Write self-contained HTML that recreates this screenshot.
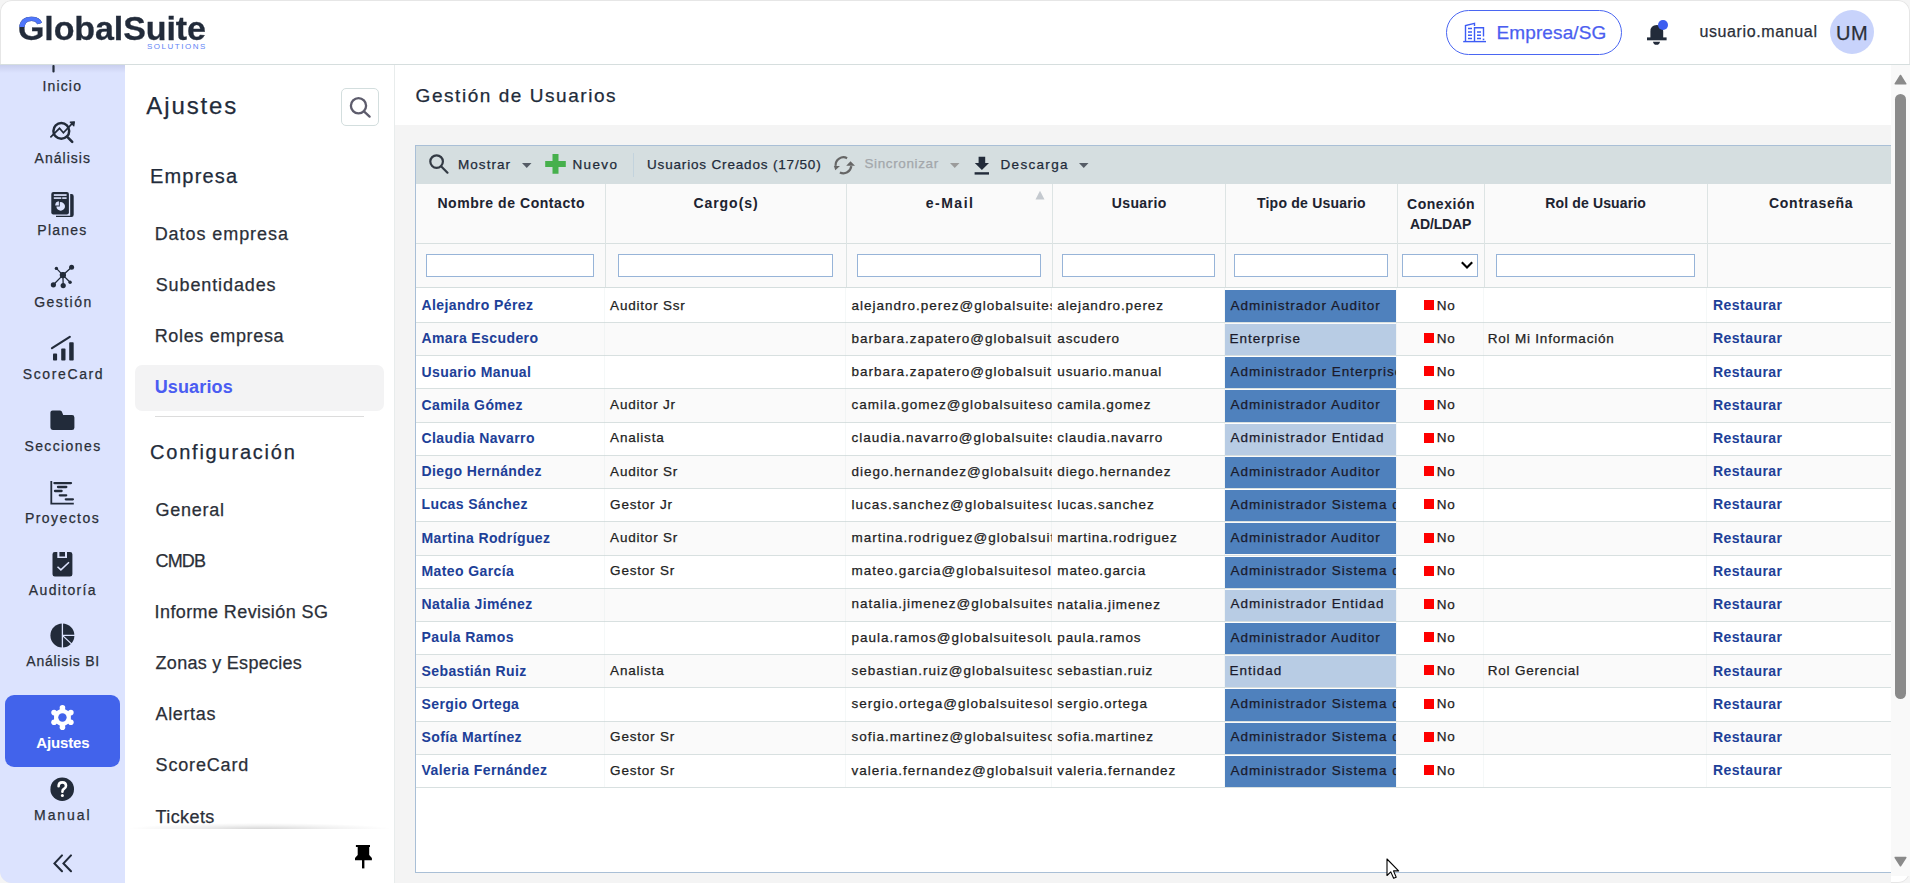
<!DOCTYPE html>
<html><head><meta charset="utf-8"><style>
html,body{margin:0;padding:0;}
body{width:1910px;height:883px;overflow:hidden;position:relative;background:#f5f5f5;font-family:"Liberation Sans", sans-serif;}
.t{position:absolute;white-space:nowrap;-webkit-text-stroke:0.25px currentColor;}
.b{-webkit-text-stroke:0.05px currentColor;}
.a{position:absolute;}
svg{position:absolute;overflow:visible;}
</style></head><body>
<div class="a" style="left:0;top:0;width:1910px;height:883px;background:#fff;border-radius:12px;box-shadow:0 0 0 1px #e6e6e6 inset;"></div>
<div class="a" style="left:0;top:64px;width:1910px;height:1px;background:#d6dede;"></div>
<div class="a" style="left:0;top:65px;width:125px;height:818px;background:#dce3fe;border-bottom-left-radius:12px;"></div>
<div class="a" style="left:0;top:65px;width:125px;height:8px;background:linear-gradient(#c9cfee,rgba(220,227,254,0));"></div>
<div class="a" style="left:394px;top:65px;width:1px;height:818px;background:#e8ecec;"></div>
<div class="a" style="left:395px;top:125px;width:1496px;height:758px;background:#f4f4f4;"></div>
<div class="t b" style="left:18.00px;top:11.22px;font-size:34px;line-height:34px;color:#222b3a;font-weight:700;letter-spacing:-0.100px;background:linear-gradient(#4f76fb,#4f76fb) 0 0/27px 16.5px no-repeat,linear-gradient(#222b3a,#222b3a);-webkit-background-clip:text;background-clip:text;color:transparent;-webkit-text-stroke:0.3px transparent;">GlobalSuite</div>
<div class="t" style="left:147.00px;top:43.23px;font-size:8px;line-height:8px;color:#5f84f5;letter-spacing:1.513px;-webkit-text-stroke:0;">SOLUTIONS</div>
<div class="a" style="left:1446px;top:10px;width:174px;height:43px;border:1.2px solid #4a66f2;border-radius:23px;"></div>
<svg style="left:1462px;top:22px" width="26" height="22" viewBox="0 0 26 22" fill="none" stroke="#3d5cf5" stroke-width="1.4">
<path d="M3.5 19.5 V3.6 L12.5 1.3 V4"/><path d="M12.5 19.5 V5.8 H21.5 V14.5"/><path d="M1.2 19.6 H24"/>
<path d="M6 6.5h4M6 10h4M6 13.3h4M6 16.5h4M15 10h4M15 13.3h4M15 16.5h4" stroke-width="1.5"/>
<rect x="20.7" y="16.6" width="1.6" height="1.6" fill="#3d5cf5" stroke="none"/>
</svg>
<div class="t" style="left:1496.50px;top:22.62px;font-size:19px;line-height:19px;color:#4b5ef0;letter-spacing:0.113px;">Empresa/SG</div>
<svg style="left:1646px;top:24px" width="22" height="22" viewBox="0 0 22 22">
<path d="M4.4 14 V7.5 Q4.4 1 10.8 1 Q17.2 1 17.2 7.5 V14 Z" fill="#222b3a"/>
<rect x="1" y="13.4" width="19.6" height="2.9" fill="#222b3a"/>
<path d="M7 17.7 H14 Q13.6 20.8 10.5 20.8 Q7.4 20.8 7 17.7Z" fill="#222b3a"/>
</svg>
<div class="a" style="left:1658px;top:20.2px;width:9.8px;height:9.8px;border-radius:50%;background:#3d5ef0;"></div>
<div class="t" style="left:1699.40px;top:23.86px;font-size:16px;line-height:16px;color:#2b2f38;letter-spacing:0.627px;">usuario.manual</div>
<div class="a" style="left:1830px;top:10px;width:44px;height:44px;border-radius:50%;background:#c8d3fb;"></div>
<div class="t" style="left:1836.00px;top:23.07px;font-size:20px;line-height:20px;color:#2b2f38;letter-spacing:0.557px;">UM</div>
<div class="a" style="left:5px;top:695px;width:115px;height:72px;background:#4263eb;border-radius:9px;"></div>
<svg style="left:0;top:0" width="125" height="883" viewBox="0 0 125 883">
<g fill="#222b3a" stroke="none">
 <rect x="52.4" y="65" width="2.2" height="7.6" rx="1"/>
</g>
<!-- Analisis -->
<g fill="none" stroke="#222b3a" stroke-linecap="round" stroke-linejoin="miter">
 <circle cx="61.3" cy="130.9" r="7.9" stroke-width="2.5"/>
 <path d="M67.8 137.4 L72.2 141.8" stroke-width="2.6"/>
 <path d="M50.9 136.8 L59.5 128.3 L63.4 132.8 L71.6 124.2" stroke-width="1.7"/>
 <path d="M70.2 122.2 L74.4 121.8 L73.8 125.8 Z" fill="#222b3a" stroke-width="1.2" stroke-linejoin="round"/>
</g>
<!-- Planes -->
<g fill="#222b3a">
 <rect x="51.3" y="191.9" width="17.6" height="22.7" rx="2"/>
 <path d="M70.2 194 H71.5 Q73.7 194 73.7 196.2 V214.8 Q73.7 217 71.5 217 H56 V215.7 H70.2 Z"/>
</g>
<g fill="#dce3fe">
 <rect x="53.8" y="194.2" width="12.8" height="1.7"/>
 <rect x="53.8" y="197.3" width="7.5" height="1.6"/>
 <rect x="62.2" y="197.3" width="4.4" height="1.6"/>
 <path d="M59.8 202.2 A4.3 4.3 0 1 1 56.4 206.4 L59.8 206.4 Z"/>
 <path d="M55.2 205.6 A4.2 4.2 0 0 1 58.9 201.2 V205.6 Z"/>
</g>
<!-- Gestion -->
<g fill="#222b3a" stroke="#222b3a" stroke-width="1.3">
 <path d="M56.4 268.4 L62.9 275.1 L71.6 267.2 M62.9 275.1 L53.4 284.8 M62.9 275.1 L63.2 285.6 M62.9 275.1 L70.1 282.3" fill="none"/>
 <circle cx="56.4" cy="268.4" r="1.7" stroke="none"/>
 <circle cx="71.6" cy="267.2" r="2.5" stroke="none"/>
 <rect x="59.8" y="272" width="6.2" height="6.2" rx="2.4" stroke="none"/>
 <circle cx="53.4" cy="284.8" r="2.6" stroke="none"/>
 <circle cx="63.2" cy="285.6" r="2.6" stroke="none"/>
 <circle cx="70.1" cy="282.3" r="1.7" stroke="none"/>
</g>
<!-- ScoreCard -->
<g fill="#222b3a">
 <path d="M52 348.1 L69.8 336.9" stroke="#222b3a" stroke-width="2.2" stroke-linecap="round"/>
 <rect x="53" y="353.6" width="4.1" height="7" rx="0.8"/>
 <rect x="61.2" y="348.6" width="4.3" height="12" rx="0.8"/>
 <rect x="69.2" y="342.3" width="4.5" height="18.3" rx="0.8"/>
</g>
<!-- Secciones -->
<path fill="#222b3a" d="M52.6 410.4 H59.8 Q61 410.4 61.8 411.4 L63.2 415.1 H72 Q74.4 415.1 74.4 417.5 V427.8 Q74.4 430 72 430 H52.8 Q50.4 430 50.4 427.6 V412.6 Q50.4 410.4 52.6 410.4Z"/>
<!-- Proyectos -->
<g stroke="#222b3a" stroke-linecap="round" fill="none">
 <path d="M51.3 481 V503.6 H73.8" stroke-width="1.8" stroke-linecap="butt"/>
 <path d="M54.4 483.1 H71 M58 487 H66.3 M55 491 H61.6 M59.8 495.3 H66.2 M65.8 499.3 H72.9" stroke-width="2.3"/>
</g>
<!-- Auditoria -->
<path fill="#222b3a" d="M54.8 551.9 H57.3 V558 H67 V551.9 H70 Q72.4 551.9 72.4 554.3 V574.2 Q72.4 576.6 70 576.6 H54.9 Q52.5 576.6 52.5 574.2 V554.3 Q52.5 551.9 54.8 551.9Z"/>
<rect x="59.4" y="552" width="5.6" height="4.5" fill="#222b3a"/>
<path d="M57.5 566.8 L60.9 569.9 L69 562.3" stroke="#dce3fe" stroke-width="1.5" fill="none"/>
<!-- Analisis BI -->
<g>
 <circle cx="62.4" cy="635.4" r="12" fill="#222b3a"/>
 <path d="M62.4 622 V649 M62.4 635.4 H76 M62.4 635.4 L72 644.4" stroke="#dce3fe" stroke-width="1.3"/>
</g>
<!-- Ajustes gear -->
<g transform="translate(62.45 717.45)">
 <path fill="#fff" d="M0.00 -9.70 Q4.20 -7.27 8.40 -4.85 Q8.40 0.00 8.40 4.85 Q4.20 7.27 0.00 9.70 Q-4.20 7.27 -8.40 4.85 Q-8.40 0.00 -8.40 -4.85 Q-4.20 -7.27 -0.00 -9.70 Z"/><circle cx="0.00" cy="-9.70" r="2.8" fill="#fff"/><circle cx="8.40" cy="-4.85" r="2.8" fill="#fff"/><circle cx="8.40" cy="4.85" r="2.8" fill="#fff"/><circle cx="0.00" cy="9.70" r="2.8" fill="#fff"/><circle cx="-8.40" cy="4.85" r="2.8" fill="#fff"/><circle cx="-8.40" cy="-4.85" r="2.8" fill="#fff"/>
 <circle r="4.2" fill="#4263eb"/>
</g>
<!-- Manual -->
<circle cx="62.2" cy="789.2" r="11.8" fill="#222b3a"/>
<path d="M58.6 786.3 Q58.6 782.4 62.3 782.4 Q66 782.4 66 785.8 Q66 787.9 63.8 789 Q62.4 789.7 62.4 791.8" stroke="#fff" stroke-width="2.6" fill="none" stroke-linecap="round"/>
<circle cx="62.4" cy="795.6" r="1.5" fill="#fff"/>
<!-- chevrons -->
<path d="M62 855.4 L54.5 863.4 L62 871.2 M71 855.4 L63.5 863.4 L71 871.2" stroke="#222b3a" stroke-width="2.1" fill="none" stroke-linecap="round"/>
</svg>
<div class="t" style="left:42.45px;top:79.05px;font-size:14px;line-height:14px;color:#2b2f38;letter-spacing:1.161px;">Inicio</div>
<div class="t" style="left:34.60px;top:150.65px;font-size:14px;line-height:14px;color:#2b2f38;letter-spacing:1.023px;">Análisis</div>
<div class="t" style="left:37.35px;top:222.75px;font-size:14px;line-height:14px;color:#2b2f38;letter-spacing:1.219px;">Planes</div>
<div class="t" style="left:34.20px;top:294.75px;font-size:14px;line-height:14px;color:#2b2f38;letter-spacing:1.456px;">Gestión</div>
<div class="t" style="left:22.80px;top:366.65px;font-size:14px;line-height:14px;color:#2b2f38;letter-spacing:1.609px;">ScoreCard</div>
<div class="t" style="left:24.45px;top:438.85px;font-size:14px;line-height:14px;color:#2b2f38;letter-spacing:1.388px;">Secciones</div>
<div class="t" style="left:24.95px;top:510.65px;font-size:14px;line-height:14px;color:#2b2f38;letter-spacing:1.431px;">Proyectos</div>
<div class="t" style="left:28.85px;top:582.75px;font-size:14px;line-height:14px;color:#2b2f38;letter-spacing:1.331px;">Auditoría</div>
<div class="t" style="left:26.35px;top:654.05px;font-size:14px;line-height:14px;color:#2b2f38;letter-spacing:0.743px;">Análisis BI</div>
<div class="t b" style="left:36.20px;top:735.30px;font-size:15px;line-height:15px;color:#fff;font-weight:700;letter-spacing:-0.140px;">Ajustes</div>
<div class="t" style="left:34.05px;top:807.85px;font-size:14px;line-height:14px;color:#2b2f38;letter-spacing:1.939px;">Manual</div>
<div class="t" style="left:146.30px;top:93.68px;font-size:24px;line-height:24px;color:#222b3a;letter-spacing:1.883px;">Ajustes</div>
<div class="a" style="left:341px;top:88px;width:36px;height:36px;border:1px solid #d3dede;border-radius:5px;background:#fff;"></div>
<svg style="left:349px;top:96px" width="24" height="24" viewBox="0 0 24 24" fill="none" stroke="#5d5c6c" stroke-width="2.3" stroke-linecap="round">
<circle cx="9.5" cy="9.8" r="7.6"/><path d="M15.2 15.6 L20.6 20.6"/></svg>
<div class="t" style="left:150.00px;top:165.87px;font-size:20px;line-height:20px;color:#222b3a;letter-spacing:1.182px;">Empresa</div>
<div class="t" style="left:154.70px;top:225.16px;font-size:18px;line-height:18px;color:#2b2f38;letter-spacing:0.930px;">Datos empresa</div>
<div class="t" style="left:155.70px;top:276.16px;font-size:18px;line-height:18px;color:#2b2f38;letter-spacing:0.892px;">Subentidades</div>
<div class="t" style="left:154.70px;top:327.16px;font-size:18px;line-height:18px;color:#2b2f38;letter-spacing:0.655px;">Roles empresa</div>
<div class="a" style="left:135px;top:365px;width:249px;height:46px;background:#f3f3f4;border-radius:7px;"></div>
<div class="t b" style="left:154.70px;top:378.36px;font-size:18px;line-height:18px;color:#4a5cf2;font-weight:700;letter-spacing:0.140px;">Usuarios</div>
<div class="a" style="left:155px;top:416px;width:209px;height:1px;background:#dcdcdc;"></div>
<div class="t" style="left:150.00px;top:442.27px;font-size:20px;line-height:20px;color:#222b3a;letter-spacing:1.785px;">Configuración</div>
<div class="t" style="left:155.60px;top:500.66px;font-size:18px;line-height:18px;color:#2b2f38;letter-spacing:0.744px;">General</div>
<div class="t" style="left:155.60px;top:551.76px;font-size:18px;line-height:18px;color:#2b2f38;letter-spacing:-0.864px;">CMDB</div>
<div class="t" style="left:154.60px;top:602.76px;font-size:18px;line-height:18px;color:#2b2f38;letter-spacing:0.402px;">Informe Revisión SG</div>
<div class="t" style="left:155.60px;top:654.26px;font-size:18px;line-height:18px;color:#2b2f38;letter-spacing:0.276px;">Zonas y Especies</div>
<div class="t" style="left:155.60px;top:705.36px;font-size:18px;line-height:18px;color:#2b2f38;letter-spacing:0.630px;">Alertas</div>
<div class="t" style="left:155.60px;top:755.96px;font-size:18px;line-height:18px;color:#2b2f38;letter-spacing:0.822px;">ScoreCard</div>
<div class="t" style="left:155.60px;top:807.56px;font-size:18px;line-height:18px;color:#2b2f38;letter-spacing:0.394px;">Tickets</div>
<div class="a" style="left:125px;top:829px;width:269px;height:54px;background:#fff;"></div>
<div class="a" style="left:127px;top:823px;width:265px;height:6px;background:radial-gradient(ellipse 50% 100% at 50% 100%,rgba(0,0,0,0.16),rgba(0,0,0,0.05) 60%,rgba(0,0,0,0) 100%);"></div>
<svg style="left:352px;top:844px" width="22" height="26" viewBox="0 0 22 26" fill="#000">
<path d="M3.9 1 H18 V3 H17.2 V11 L19.9 14 V16.2 H3 V14 L5.7 11 V3 H3.9Z"/><rect x="10" y="16" width="2.4" height="8.4"/></svg>
<div class="t" style="left:415.60px;top:85.72px;font-size:19px;line-height:19px;color:#222b3a;letter-spacing:1.548px;">Gestión de Usuarios</div>
<div class="a" style="left:415px;top:145px;width:1476px;height:728px;background:#fff;border:1px solid #a9bfd6;border-right:none;box-sizing:border-box;"></div>
<div class="a" style="left:416px;top:146px;width:1475px;height:38px;background:#d5dee0;"></div>
<svg style="left:428px;top:153px" width="22" height="22" viewBox="0 0 22 22" fill="none" stroke="#333a44" stroke-width="2.2" stroke-linecap="round">
<circle cx="8.6" cy="8.6" r="6.3"/><path d="M13.3 13.4 L19.5 19.7"/></svg>
<div class="t" style="left:458.00px;top:157.57px;font-size:13.5px;line-height:13.5px;color:#222b3a;letter-spacing:1.057px;">Mostrar</div>
<svg style="left:521.5px;top:163.2px" width="10" height="6" viewBox="0 0 10 6"><path d="M0 0 H9.5 L4.75 5Z" fill="#555c66"/></svg>
<svg style="left:545px;top:154px" width="21" height="20" viewBox="0 0 21 20"><path d="M7.5 0 H13.5 V7 H20.8 V13 H13.5 V19.8 H7.5 V13 H0.2 V7 H7.5Z" fill="#46b04c"/></svg>
<div class="t" style="left:572.40px;top:157.57px;font-size:13.5px;line-height:13.5px;color:#222b3a;letter-spacing:1.371px;">Nuevo</div>
<div class="a" style="left:633px;top:153px;width:1px;height:24px;background:#c3d3dd;"></div>
<div class="t" style="left:647.00px;top:157.57px;font-size:13.5px;line-height:13.5px;color:#222b3a;letter-spacing:0.832px;">Usuarios Creados (17/50)</div>
<svg style="left:828px;top:151px" width="30" height="26" viewBox="0 0 30 26" fill="none" stroke="#666" stroke-width="2.2">
<path d="M19.1 7.2 A7.9 7.9 0 0 0 7.6 14.8"/><path d="M11.9 21.4 A7.9 7.9 0 0 0 23.3 15.2"/>
<path d="M5.9 15.1 H12 L7.3 19.2Z" fill="#666" stroke="none"/><path d="M18.2 14.7 H27 L22.5 10.2Z" fill="#666" stroke="none"/></svg>
<div class="t" style="left:864.40px;top:157.17px;font-size:13.5px;line-height:13.5px;color:#a3a7ab;letter-spacing:0.627px;">Sincronizar</div>
<svg style="left:950px;top:163.1px" width="10" height="6" viewBox="0 0 10 6"><path d="M0 0 H9.5 L4.75 5Z" fill="#9b9b9b"/></svg>
<svg style="left:974px;top:156px" width="16" height="20" viewBox="0 0 16 20" fill="#222b3a">
<path d="M4.6 0.7 H11.2 V7 H15 L7.9 14 L0.8 7 H4.6Z"/><rect x="0.6" y="16.2" width="14.4" height="2.4"/></svg>
<div class="t" style="left:1000.50px;top:157.57px;font-size:13.5px;line-height:13.5px;color:#222b3a;letter-spacing:1.319px;">Descarga</div>
<svg style="left:1078.5px;top:163.2px" width="10" height="6" viewBox="0 0 10 6"><path d="M0 0 H9.5 L4.75 5Z" fill="#555c66"/></svg>
<div class="a" style="left:416px;top:184px;width:1475px;height:103px;background:#fafafa;"></div>
<div class="a" style="left:416px;top:243px;width:1475px;height:1px;background:#d8e0e0;"></div>
<div class="a" style="left:416px;top:287px;width:1475px;height:1px;background:#d5dede;"></div>
<div class="a" style="left:605px;top:184px;width:1px;height:103px;background:#dde4e4;"></div>
<div class="a" style="left:846px;top:184px;width:1px;height:103px;background:#dde4e4;"></div>
<div class="a" style="left:1052px;top:184px;width:1px;height:103px;background:#dde4e4;"></div>
<div class="a" style="left:1225px;top:184px;width:1px;height:103px;background:#dde4e4;"></div>
<div class="a" style="left:1397px;top:184px;width:1px;height:103px;background:#dde4e4;"></div>
<div class="a" style="left:1484px;top:184px;width:1px;height:103px;background:#dde4e4;"></div>
<div class="a" style="left:1707px;top:184px;width:1px;height:103px;background:#dde4e4;"></div>
<div class="t b" style="left:437.45px;top:196.15px;font-size:14px;line-height:14px;color:#1d2330;font-weight:700;letter-spacing:0.552px;">Nombre de Contacto</div>
<div class="t b" style="left:693.40px;top:196.15px;font-size:14px;line-height:14px;color:#1d2330;font-weight:700;letter-spacing:0.958px;">Cargo(s)</div>
<div class="t b" style="left:925.80px;top:196.15px;font-size:14px;line-height:14px;color:#1d2330;font-weight:700;letter-spacing:1.483px;">e-Mail</div>
<div class="t b" style="left:1111.70px;top:196.15px;font-size:14px;line-height:14px;color:#1d2330;font-weight:700;letter-spacing:0.405px;">Usuario</div>
<div class="t b" style="left:1257.00px;top:196.15px;font-size:14px;line-height:14px;color:#1d2330;font-weight:700;letter-spacing:0.216px;">Tipo de Usuario</div>
<div class="t b" style="left:1545.30px;top:196.15px;font-size:14px;line-height:14px;color:#1d2330;font-weight:700;letter-spacing:0.135px;">Rol de Usuario</div>
<div class="t b" style="left:1769.00px;top:196.15px;font-size:14px;line-height:14px;color:#1d2330;font-weight:700;letter-spacing:0.730px;">Contraseña</div>
<div class="t b" style="left:1407.00px;top:196.55px;font-size:14px;line-height:14px;color:#1d2330;font-weight:700;letter-spacing:0.539px;">Conexión</div>
<div class="t b" style="left:1410.00px;top:216.85px;font-size:14px;line-height:14px;color:#1d2330;font-weight:700;letter-spacing:-0.147px;">AD/LDAP</div>
<svg style="left:1035px;top:190px" width="10" height="10" viewBox="0 0 10 10"><path d="M0.5 9.5 H9.5 L5 0.8Z" fill="#c4c9cf"/></svg>
<div class="a" style="left:426px;top:254px;width:168px;height:23px;background:#fff;box-shadow:inset 0 0 0 1px #97b4d8;"></div>
<div class="a" style="left:618px;top:254px;width:215px;height:23px;background:#fff;box-shadow:inset 0 0 0 1px #97b4d8;"></div>
<div class="a" style="left:857px;top:254px;width:184px;height:23px;background:#fff;box-shadow:inset 0 0 0 1px #97b4d8;"></div>
<div class="a" style="left:1062px;top:254px;width:153px;height:23px;background:#fff;box-shadow:inset 0 0 0 1px #97b4d8;"></div>
<div class="a" style="left:1234px;top:254px;width:154px;height:23px;background:#fff;box-shadow:inset 0 0 0 1px #97b4d8;"></div>
<div class="a" style="left:1496px;top:254px;width:199px;height:23px;background:#fff;box-shadow:inset 0 0 0 1px #97b4d8;"></div>
<div class="a" style="left:1402px;top:254px;width:76px;height:23px;background:#fff;box-shadow:inset 0 0 0 1px #97b4d8;"></div>
<svg style="left:1461px;top:261px" width="12" height="9" viewBox="0 0 12 9"><path d="M0.8 1.2 L6 6.6 L11.2 1.2" stroke="#000" stroke-width="2.1" fill="none"/></svg>
<div class="a" style="left:416px;top:288.00px;width:1475px;height:35.00px;background:#ffffff;"></div>
<div class="a" style="left:416px;top:322.00px;width:1475px;height:1px;background:#d8e0e0;"></div>
<div class="a" style="left:1225px;top:290.00px;width:171px;height:32.00px;background:#4f81bd;"></div>
<div class="t b" style="left:421.50px;top:298.15px;font-size:14px;line-height:14px;color:#1d3f98;font-weight:700;letter-spacing:0.400px;">Alejandro Pérez</div>
<div class="t" style="left:610.10px;top:298.57px;font-size:13.5px;line-height:13.5px;color:#222;letter-spacing:0.800px;">Auditor Ssr</div>
<div class="a" style="left:846px;top:288.00px;width:206px;height:35.00px;overflow:hidden;">
<div class="t" style="left:5.40px;top:10.57px;font-size:13.5px;line-height:13.5px;color:#222;letter-spacing:1.000px;">alejandro.perez@globalsuitesolutions.com</div>
</div>
<div class="t" style="left:1057.30px;top:298.57px;font-size:13.5px;line-height:13.5px;color:#222;letter-spacing:0.900px;">alejandro.perez</div>
<div class="a" style="left:1225px;top:288.00px;width:171px;height:35.00px;overflow:hidden;">
<div class="t" style="left:5.60px;top:10.57px;font-size:13.5px;line-height:13.5px;color:#1a1a2a;letter-spacing:1.000px;">Administrador Auditor</div>
</div>
<div class="a" style="left:1424px;top:300.00px;width:10px;height:10px;background:#f00;"></div>
<div class="t" style="left:1436.70px;top:298.57px;font-size:13.5px;line-height:13.5px;color:#222;letter-spacing:0.900px;">No</div>
<div class="t b" style="left:1712.90px;top:298.15px;font-size:14px;line-height:14px;color:#1d3f98;font-weight:700;letter-spacing:0.473px;">Restaurar</div>
<div class="a" style="left:416px;top:323.00px;width:1475px;height:33.21px;background:#fafafa;"></div>
<div class="a" style="left:416px;top:355.21px;width:1475px;height:1px;background:#d8e0e0;"></div>
<div class="a" style="left:1225px;top:324.00px;width:171px;height:31.21px;background:#b8cce4;"></div>
<div class="t b" style="left:421.50px;top:331.36px;font-size:14px;line-height:14px;color:#1d3f98;font-weight:700;letter-spacing:0.400px;">Amara Escudero</div>
<div class="a" style="left:846px;top:323.00px;width:206px;height:33.21px;overflow:hidden;">
<div class="t" style="left:5.40px;top:8.79px;font-size:13.5px;line-height:13.5px;color:#222;letter-spacing:1.000px;">barbara.zapatero@globalsuitesolutions.com</div>
</div>
<div class="t" style="left:1057.30px;top:331.79px;font-size:13.5px;line-height:13.5px;color:#222;letter-spacing:0.900px;">ascudero</div>
<div class="a" style="left:1225px;top:323.00px;width:171px;height:33.21px;overflow:hidden;">
<div class="t" style="left:4.60px;top:8.79px;font-size:13.5px;line-height:13.5px;color:#1a1a2a;letter-spacing:1.000px;">Enterprise</div>
</div>
<div class="a" style="left:1424px;top:333.21px;width:10px;height:10px;background:#f00;"></div>
<div class="t" style="left:1436.70px;top:331.79px;font-size:13.5px;line-height:13.5px;color:#222;letter-spacing:0.900px;">No</div>
<div class="t" style="left:1487.70px;top:331.79px;font-size:13.5px;line-height:13.5px;color:#222;letter-spacing:0.800px;">Rol Mi Información</div>
<div class="t b" style="left:1712.90px;top:331.36px;font-size:14px;line-height:14px;color:#1d3f98;font-weight:700;letter-spacing:0.473px;">Restaurar</div>
<div class="a" style="left:416px;top:356.21px;width:1475px;height:33.21px;background:#ffffff;"></div>
<div class="a" style="left:416px;top:388.43px;width:1475px;height:1px;background:#d8e0e0;"></div>
<div class="a" style="left:1225px;top:357.21px;width:171px;height:31.21px;background:#4f81bd;"></div>
<div class="t b" style="left:421.50px;top:364.58px;font-size:14px;line-height:14px;color:#1d3f98;font-weight:700;letter-spacing:0.400px;">Usuario Manual</div>
<div class="a" style="left:846px;top:356.21px;width:206px;height:33.21px;overflow:hidden;">
<div class="t" style="left:5.40px;top:8.79px;font-size:13.5px;line-height:13.5px;color:#222;letter-spacing:1.000px;">barbara.zapatero@globalsuitesolutions.com</div>
</div>
<div class="t" style="left:1057.30px;top:365.00px;font-size:13.5px;line-height:13.5px;color:#222;letter-spacing:0.900px;">usuario.manual</div>
<div class="a" style="left:1225px;top:356.21px;width:171px;height:33.21px;overflow:hidden;">
<div class="t" style="left:5.60px;top:8.79px;font-size:13.5px;line-height:13.5px;color:#1a1a2a;letter-spacing:1.000px;">Administrador Enterprise</div>
</div>
<div class="a" style="left:1424px;top:366.43px;width:10px;height:10px;background:#f00;"></div>
<div class="t" style="left:1436.70px;top:365.00px;font-size:13.5px;line-height:13.5px;color:#222;letter-spacing:0.900px;">No</div>
<div class="t b" style="left:1712.90px;top:364.58px;font-size:14px;line-height:14px;color:#1d3f98;font-weight:700;letter-spacing:0.473px;">Restaurar</div>
<div class="a" style="left:416px;top:389.43px;width:1475px;height:33.21px;background:#fafafa;"></div>
<div class="a" style="left:416px;top:421.64px;width:1475px;height:1px;background:#d8e0e0;"></div>
<div class="a" style="left:1225px;top:390.43px;width:171px;height:31.21px;background:#4f81bd;"></div>
<div class="t b" style="left:421.50px;top:397.79px;font-size:14px;line-height:14px;color:#1d3f98;font-weight:700;letter-spacing:0.400px;">Camila Gómez</div>
<div class="t" style="left:610.10px;top:398.21px;font-size:13.5px;line-height:13.5px;color:#222;letter-spacing:0.800px;">Auditor Jr</div>
<div class="a" style="left:846px;top:389.43px;width:206px;height:33.21px;overflow:hidden;">
<div class="t" style="left:5.40px;top:8.79px;font-size:13.5px;line-height:13.5px;color:#222;letter-spacing:1.000px;">camila.gomez@globalsuitesolutions.com</div>
</div>
<div class="t" style="left:1057.30px;top:398.21px;font-size:13.5px;line-height:13.5px;color:#222;letter-spacing:0.900px;">camila.gomez</div>
<div class="a" style="left:1225px;top:389.43px;width:171px;height:33.21px;overflow:hidden;">
<div class="t" style="left:5.60px;top:8.79px;font-size:13.5px;line-height:13.5px;color:#1a1a2a;letter-spacing:1.000px;">Administrador Auditor</div>
</div>
<div class="a" style="left:1424px;top:399.64px;width:10px;height:10px;background:#f00;"></div>
<div class="t" style="left:1436.70px;top:398.21px;font-size:13.5px;line-height:13.5px;color:#222;letter-spacing:0.900px;">No</div>
<div class="t b" style="left:1712.90px;top:397.79px;font-size:14px;line-height:14px;color:#1d3f98;font-weight:700;letter-spacing:0.473px;">Restaurar</div>
<div class="a" style="left:416px;top:422.64px;width:1475px;height:33.21px;background:#ffffff;"></div>
<div class="a" style="left:416px;top:454.86px;width:1475px;height:1px;background:#d8e0e0;"></div>
<div class="a" style="left:1225px;top:423.64px;width:171px;height:31.21px;background:#b8cce4;"></div>
<div class="t b" style="left:421.50px;top:431.00px;font-size:14px;line-height:14px;color:#1d3f98;font-weight:700;letter-spacing:0.400px;">Claudia Navarro</div>
<div class="t" style="left:610.10px;top:431.43px;font-size:13.5px;line-height:13.5px;color:#222;letter-spacing:0.800px;">Analista</div>
<div class="a" style="left:846px;top:422.64px;width:206px;height:33.21px;overflow:hidden;">
<div class="t" style="left:5.40px;top:8.79px;font-size:13.5px;line-height:13.5px;color:#222;letter-spacing:1.000px;">claudia.navarro@globalsuitesolutions.com</div>
</div>
<div class="t" style="left:1057.30px;top:431.43px;font-size:13.5px;line-height:13.5px;color:#222;letter-spacing:0.900px;">claudia.navarro</div>
<div class="a" style="left:1225px;top:422.64px;width:171px;height:33.21px;overflow:hidden;">
<div class="t" style="left:5.60px;top:8.79px;font-size:13.5px;line-height:13.5px;color:#1a1a2a;letter-spacing:1.000px;">Administrador Entidad</div>
</div>
<div class="a" style="left:1424px;top:432.86px;width:10px;height:10px;background:#f00;"></div>
<div class="t" style="left:1436.70px;top:431.43px;font-size:13.5px;line-height:13.5px;color:#222;letter-spacing:0.900px;">No</div>
<div class="t b" style="left:1712.90px;top:431.00px;font-size:14px;line-height:14px;color:#1d3f98;font-weight:700;letter-spacing:0.473px;">Restaurar</div>
<div class="a" style="left:416px;top:455.86px;width:1475px;height:33.21px;background:#fafafa;"></div>
<div class="a" style="left:416px;top:488.07px;width:1475px;height:1px;background:#d8e0e0;"></div>
<div class="a" style="left:1225px;top:456.86px;width:171px;height:31.21px;background:#4f81bd;"></div>
<div class="t b" style="left:421.50px;top:464.22px;font-size:14px;line-height:14px;color:#1d3f98;font-weight:700;letter-spacing:0.400px;">Diego Hernández</div>
<div class="t" style="left:610.10px;top:464.64px;font-size:13.5px;line-height:13.5px;color:#222;letter-spacing:0.800px;">Auditor Sr</div>
<div class="a" style="left:846px;top:455.86px;width:206px;height:33.21px;overflow:hidden;">
<div class="t" style="left:5.40px;top:8.79px;font-size:13.5px;line-height:13.5px;color:#222;letter-spacing:1.000px;">diego.hernandez@globalsuitesolutions.com</div>
</div>
<div class="t" style="left:1057.30px;top:464.64px;font-size:13.5px;line-height:13.5px;color:#222;letter-spacing:0.900px;">diego.hernandez</div>
<div class="a" style="left:1225px;top:455.86px;width:171px;height:33.21px;overflow:hidden;">
<div class="t" style="left:5.60px;top:8.79px;font-size:13.5px;line-height:13.5px;color:#1a1a2a;letter-spacing:1.000px;">Administrador Auditor</div>
</div>
<div class="a" style="left:1424px;top:466.07px;width:10px;height:10px;background:#f00;"></div>
<div class="t" style="left:1436.70px;top:464.64px;font-size:13.5px;line-height:13.5px;color:#222;letter-spacing:0.900px;">No</div>
<div class="t b" style="left:1712.90px;top:464.22px;font-size:14px;line-height:14px;color:#1d3f98;font-weight:700;letter-spacing:0.473px;">Restaurar</div>
<div class="a" style="left:416px;top:489.07px;width:1475px;height:33.21px;background:#ffffff;"></div>
<div class="a" style="left:416px;top:521.28px;width:1475px;height:1px;background:#d8e0e0;"></div>
<div class="a" style="left:1225px;top:490.07px;width:171px;height:31.21px;background:#4f81bd;"></div>
<div class="t b" style="left:421.50px;top:497.43px;font-size:14px;line-height:14px;color:#1d3f98;font-weight:700;letter-spacing:0.400px;">Lucas Sánchez</div>
<div class="t" style="left:610.10px;top:497.86px;font-size:13.5px;line-height:13.5px;color:#222;letter-spacing:0.800px;">Gestor Jr</div>
<div class="a" style="left:846px;top:489.07px;width:206px;height:33.21px;overflow:hidden;">
<div class="t" style="left:5.40px;top:8.79px;font-size:13.5px;line-height:13.5px;color:#222;letter-spacing:1.000px;">lucas.sanchez@globalsuitesolutions.com</div>
</div>
<div class="t" style="left:1057.30px;top:497.86px;font-size:13.5px;line-height:13.5px;color:#222;letter-spacing:0.900px;">lucas.sanchez</div>
<div class="a" style="left:1225px;top:489.07px;width:171px;height:33.21px;overflow:hidden;">
<div class="t" style="left:5.60px;top:8.79px;font-size:13.5px;line-height:13.5px;color:#1a1a2a;letter-spacing:1.000px;">Administrador Sistema de Gestión</div>
</div>
<div class="a" style="left:1424px;top:499.28px;width:10px;height:10px;background:#f00;"></div>
<div class="t" style="left:1436.70px;top:497.86px;font-size:13.5px;line-height:13.5px;color:#222;letter-spacing:0.900px;">No</div>
<div class="t b" style="left:1712.90px;top:497.43px;font-size:14px;line-height:14px;color:#1d3f98;font-weight:700;letter-spacing:0.473px;">Restaurar</div>
<div class="a" style="left:416px;top:522.28px;width:1475px;height:33.21px;background:#fafafa;"></div>
<div class="a" style="left:416px;top:554.50px;width:1475px;height:1px;background:#d8e0e0;"></div>
<div class="a" style="left:1225px;top:523.28px;width:171px;height:31.21px;background:#4f81bd;"></div>
<div class="t b" style="left:421.50px;top:530.65px;font-size:14px;line-height:14px;color:#1d3f98;font-weight:700;letter-spacing:0.400px;">Martina Rodríguez</div>
<div class="t" style="left:610.10px;top:531.07px;font-size:13.5px;line-height:13.5px;color:#222;letter-spacing:0.800px;">Auditor Sr</div>
<div class="a" style="left:846px;top:522.28px;width:206px;height:33.21px;overflow:hidden;">
<div class="t" style="left:5.40px;top:8.79px;font-size:13.5px;line-height:13.5px;color:#222;letter-spacing:1.000px;">martina.rodriguez@globalsuitesolutions.com</div>
</div>
<div class="t" style="left:1057.30px;top:531.07px;font-size:13.5px;line-height:13.5px;color:#222;letter-spacing:0.900px;">martina.rodriguez</div>
<div class="a" style="left:1225px;top:522.28px;width:171px;height:33.21px;overflow:hidden;">
<div class="t" style="left:5.60px;top:8.79px;font-size:13.5px;line-height:13.5px;color:#1a1a2a;letter-spacing:1.000px;">Administrador Auditor</div>
</div>
<div class="a" style="left:1424px;top:532.50px;width:10px;height:10px;background:#f00;"></div>
<div class="t" style="left:1436.70px;top:531.07px;font-size:13.5px;line-height:13.5px;color:#222;letter-spacing:0.900px;">No</div>
<div class="t b" style="left:1712.90px;top:530.65px;font-size:14px;line-height:14px;color:#1d3f98;font-weight:700;letter-spacing:0.473px;">Restaurar</div>
<div class="a" style="left:416px;top:555.50px;width:1475px;height:33.21px;background:#ffffff;"></div>
<div class="a" style="left:416px;top:587.71px;width:1475px;height:1px;background:#d8e0e0;"></div>
<div class="a" style="left:1225px;top:556.50px;width:171px;height:31.21px;background:#4f81bd;"></div>
<div class="t b" style="left:421.50px;top:563.86px;font-size:14px;line-height:14px;color:#1d3f98;font-weight:700;letter-spacing:0.400px;">Mateo García</div>
<div class="t" style="left:610.10px;top:564.28px;font-size:13.5px;line-height:13.5px;color:#222;letter-spacing:0.800px;">Gestor Sr</div>
<div class="a" style="left:846px;top:555.50px;width:206px;height:33.21px;overflow:hidden;">
<div class="t" style="left:5.40px;top:8.79px;font-size:13.5px;line-height:13.5px;color:#222;letter-spacing:1.000px;">mateo.garcia@globalsuitesolutions.com</div>
</div>
<div class="t" style="left:1057.30px;top:564.28px;font-size:13.5px;line-height:13.5px;color:#222;letter-spacing:0.900px;">mateo.garcia</div>
<div class="a" style="left:1225px;top:555.50px;width:171px;height:33.21px;overflow:hidden;">
<div class="t" style="left:5.60px;top:8.79px;font-size:13.5px;line-height:13.5px;color:#1a1a2a;letter-spacing:1.000px;">Administrador Sistema de Gestión</div>
</div>
<div class="a" style="left:1424px;top:565.71px;width:10px;height:10px;background:#f00;"></div>
<div class="t" style="left:1436.70px;top:564.28px;font-size:13.5px;line-height:13.5px;color:#222;letter-spacing:0.900px;">No</div>
<div class="t b" style="left:1712.90px;top:563.86px;font-size:14px;line-height:14px;color:#1d3f98;font-weight:700;letter-spacing:0.473px;">Restaurar</div>
<div class="a" style="left:416px;top:588.71px;width:1475px;height:33.21px;background:#fafafa;"></div>
<div class="a" style="left:416px;top:620.93px;width:1475px;height:1px;background:#d8e0e0;"></div>
<div class="a" style="left:1225px;top:589.71px;width:171px;height:31.21px;background:#b8cce4;"></div>
<div class="t b" style="left:421.50px;top:597.07px;font-size:14px;line-height:14px;color:#1d3f98;font-weight:700;letter-spacing:0.400px;">Natalia Jiménez</div>
<div class="a" style="left:846px;top:588.71px;width:206px;height:33.21px;overflow:hidden;">
<div class="t" style="left:5.40px;top:8.79px;font-size:13.5px;line-height:13.5px;color:#222;letter-spacing:1.000px;">natalia.jimenez@globalsuitesolutions.com</div>
</div>
<div class="t" style="left:1057.30px;top:597.50px;font-size:13.5px;line-height:13.5px;color:#222;letter-spacing:0.900px;">natalia.jimenez</div>
<div class="a" style="left:1225px;top:588.71px;width:171px;height:33.21px;overflow:hidden;">
<div class="t" style="left:5.60px;top:8.79px;font-size:13.5px;line-height:13.5px;color:#1a1a2a;letter-spacing:1.000px;">Administrador Entidad</div>
</div>
<div class="a" style="left:1424px;top:598.93px;width:10px;height:10px;background:#f00;"></div>
<div class="t" style="left:1436.70px;top:597.50px;font-size:13.5px;line-height:13.5px;color:#222;letter-spacing:0.900px;">No</div>
<div class="t b" style="left:1712.90px;top:597.07px;font-size:14px;line-height:14px;color:#1d3f98;font-weight:700;letter-spacing:0.473px;">Restaurar</div>
<div class="a" style="left:416px;top:621.93px;width:1475px;height:33.21px;background:#ffffff;"></div>
<div class="a" style="left:416px;top:654.14px;width:1475px;height:1px;background:#d8e0e0;"></div>
<div class="a" style="left:1225px;top:622.93px;width:171px;height:31.21px;background:#4f81bd;"></div>
<div class="t b" style="left:421.50px;top:630.29px;font-size:14px;line-height:14px;color:#1d3f98;font-weight:700;letter-spacing:0.400px;">Paula Ramos</div>
<div class="a" style="left:846px;top:621.93px;width:206px;height:33.21px;overflow:hidden;">
<div class="t" style="left:5.40px;top:8.79px;font-size:13.5px;line-height:13.5px;color:#222;letter-spacing:1.000px;">paula.ramos@globalsuitesolutions.com</div>
</div>
<div class="t" style="left:1057.30px;top:630.71px;font-size:13.5px;line-height:13.5px;color:#222;letter-spacing:0.900px;">paula.ramos</div>
<div class="a" style="left:1225px;top:621.93px;width:171px;height:33.21px;overflow:hidden;">
<div class="t" style="left:5.60px;top:8.79px;font-size:13.5px;line-height:13.5px;color:#1a1a2a;letter-spacing:1.000px;">Administrador Auditor</div>
</div>
<div class="a" style="left:1424px;top:632.14px;width:10px;height:10px;background:#f00;"></div>
<div class="t" style="left:1436.70px;top:630.71px;font-size:13.5px;line-height:13.5px;color:#222;letter-spacing:0.900px;">No</div>
<div class="t b" style="left:1712.90px;top:630.29px;font-size:14px;line-height:14px;color:#1d3f98;font-weight:700;letter-spacing:0.473px;">Restaurar</div>
<div class="a" style="left:416px;top:655.14px;width:1475px;height:33.21px;background:#fafafa;"></div>
<div class="a" style="left:416px;top:687.35px;width:1475px;height:1px;background:#d8e0e0;"></div>
<div class="a" style="left:1225px;top:656.14px;width:171px;height:31.21px;background:#b8cce4;"></div>
<div class="t b" style="left:421.50px;top:663.50px;font-size:14px;line-height:14px;color:#1d3f98;font-weight:700;letter-spacing:0.400px;">Sebastián Ruiz</div>
<div class="t" style="left:610.10px;top:663.93px;font-size:13.5px;line-height:13.5px;color:#222;letter-spacing:0.800px;">Analista</div>
<div class="a" style="left:846px;top:655.14px;width:206px;height:33.21px;overflow:hidden;">
<div class="t" style="left:5.40px;top:8.79px;font-size:13.5px;line-height:13.5px;color:#222;letter-spacing:1.000px;">sebastian.ruiz@globalsuitesolutions.com</div>
</div>
<div class="t" style="left:1057.30px;top:663.93px;font-size:13.5px;line-height:13.5px;color:#222;letter-spacing:0.900px;">sebastian.ruiz</div>
<div class="a" style="left:1225px;top:655.14px;width:171px;height:33.21px;overflow:hidden;">
<div class="t" style="left:4.60px;top:8.79px;font-size:13.5px;line-height:13.5px;color:#1a1a2a;letter-spacing:1.000px;">Entidad</div>
</div>
<div class="a" style="left:1424px;top:665.35px;width:10px;height:10px;background:#f00;"></div>
<div class="t" style="left:1436.70px;top:663.93px;font-size:13.5px;line-height:13.5px;color:#222;letter-spacing:0.900px;">No</div>
<div class="t" style="left:1487.70px;top:663.93px;font-size:13.5px;line-height:13.5px;color:#222;letter-spacing:0.800px;">Rol Gerencial</div>
<div class="t b" style="left:1712.90px;top:663.50px;font-size:14px;line-height:14px;color:#1d3f98;font-weight:700;letter-spacing:0.473px;">Restaurar</div>
<div class="a" style="left:416px;top:688.35px;width:1475px;height:33.21px;background:#ffffff;"></div>
<div class="a" style="left:416px;top:720.57px;width:1475px;height:1px;background:#d8e0e0;"></div>
<div class="a" style="left:1225px;top:689.35px;width:171px;height:31.21px;background:#4f81bd;"></div>
<div class="t b" style="left:421.50px;top:696.72px;font-size:14px;line-height:14px;color:#1d3f98;font-weight:700;letter-spacing:0.400px;">Sergio Ortega</div>
<div class="a" style="left:846px;top:688.35px;width:206px;height:33.21px;overflow:hidden;">
<div class="t" style="left:5.40px;top:8.79px;font-size:13.5px;line-height:13.5px;color:#222;letter-spacing:1.000px;">sergio.ortega@globalsuitesolutions.com</div>
</div>
<div class="t" style="left:1057.30px;top:697.14px;font-size:13.5px;line-height:13.5px;color:#222;letter-spacing:0.900px;">sergio.ortega</div>
<div class="a" style="left:1225px;top:688.35px;width:171px;height:33.21px;overflow:hidden;">
<div class="t" style="left:5.60px;top:8.79px;font-size:13.5px;line-height:13.5px;color:#1a1a2a;letter-spacing:1.000px;">Administrador Sistema de Gestión</div>
</div>
<div class="a" style="left:1424px;top:698.57px;width:10px;height:10px;background:#f00;"></div>
<div class="t" style="left:1436.70px;top:697.14px;font-size:13.5px;line-height:13.5px;color:#222;letter-spacing:0.900px;">No</div>
<div class="t b" style="left:1712.90px;top:696.72px;font-size:14px;line-height:14px;color:#1d3f98;font-weight:700;letter-spacing:0.473px;">Restaurar</div>
<div class="a" style="left:416px;top:721.57px;width:1475px;height:33.21px;background:#fafafa;"></div>
<div class="a" style="left:416px;top:753.78px;width:1475px;height:1px;background:#d8e0e0;"></div>
<div class="a" style="left:1225px;top:722.57px;width:171px;height:31.21px;background:#4f81bd;"></div>
<div class="t b" style="left:421.50px;top:729.93px;font-size:14px;line-height:14px;color:#1d3f98;font-weight:700;letter-spacing:0.400px;">Sofía Martínez</div>
<div class="t" style="left:610.10px;top:730.35px;font-size:13.5px;line-height:13.5px;color:#222;letter-spacing:0.800px;">Gestor Sr</div>
<div class="a" style="left:846px;top:721.57px;width:206px;height:33.21px;overflow:hidden;">
<div class="t" style="left:5.40px;top:8.79px;font-size:13.5px;line-height:13.5px;color:#222;letter-spacing:1.000px;">sofia.martinez@globalsuitesolutions.com</div>
</div>
<div class="t" style="left:1057.30px;top:730.35px;font-size:13.5px;line-height:13.5px;color:#222;letter-spacing:0.900px;">sofia.martinez</div>
<div class="a" style="left:1225px;top:721.57px;width:171px;height:33.21px;overflow:hidden;">
<div class="t" style="left:5.60px;top:8.79px;font-size:13.5px;line-height:13.5px;color:#1a1a2a;letter-spacing:1.000px;">Administrador Sistema de Gestión</div>
</div>
<div class="a" style="left:1424px;top:731.78px;width:10px;height:10px;background:#f00;"></div>
<div class="t" style="left:1436.70px;top:730.35px;font-size:13.5px;line-height:13.5px;color:#222;letter-spacing:0.900px;">No</div>
<div class="t b" style="left:1712.90px;top:729.93px;font-size:14px;line-height:14px;color:#1d3f98;font-weight:700;letter-spacing:0.473px;">Restaurar</div>
<div class="a" style="left:416px;top:754.78px;width:1475px;height:33.21px;background:#ffffff;"></div>
<div class="a" style="left:416px;top:787.00px;width:1475px;height:1px;background:#d8e0e0;"></div>
<div class="a" style="left:1225px;top:755.78px;width:171px;height:31.21px;background:#4f81bd;"></div>
<div class="t b" style="left:421.50px;top:763.14px;font-size:14px;line-height:14px;color:#1d3f98;font-weight:700;letter-spacing:0.400px;">Valeria Fernández</div>
<div class="t" style="left:610.10px;top:763.57px;font-size:13.5px;line-height:13.5px;color:#222;letter-spacing:0.800px;">Gestor Sr</div>
<div class="a" style="left:846px;top:754.78px;width:206px;height:33.21px;overflow:hidden;">
<div class="t" style="left:5.40px;top:8.79px;font-size:13.5px;line-height:13.5px;color:#222;letter-spacing:1.000px;">valeria.fernandez@globalsuitesolutions.com</div>
</div>
<div class="t" style="left:1057.30px;top:763.57px;font-size:13.5px;line-height:13.5px;color:#222;letter-spacing:0.900px;">valeria.fernandez</div>
<div class="a" style="left:1225px;top:754.78px;width:171px;height:33.21px;overflow:hidden;">
<div class="t" style="left:5.60px;top:8.79px;font-size:13.5px;line-height:13.5px;color:#1a1a2a;letter-spacing:1.000px;">Administrador Sistema de Gestión</div>
</div>
<div class="a" style="left:1424px;top:765.00px;width:10px;height:10px;background:#f00;"></div>
<div class="t" style="left:1436.70px;top:763.57px;font-size:13.5px;line-height:13.5px;color:#222;letter-spacing:0.900px;">No</div>
<div class="t b" style="left:1712.90px;top:763.14px;font-size:14px;line-height:14px;color:#1d3f98;font-weight:700;letter-spacing:0.473px;">Restaurar</div>
<div class="a" style="left:604px;top:288px;width:1px;height:499px;background:rgba(200,215,215,0.18);"></div>
<div class="a" style="left:845px;top:288px;width:1px;height:499px;background:rgba(200,215,215,0.18);"></div>
<div class="a" style="left:1051px;top:288px;width:1px;height:499px;background:rgba(200,215,215,0.18);"></div>
<div class="a" style="left:1224px;top:288px;width:1px;height:499px;background:rgba(200,215,215,0.18);"></div>
<div class="a" style="left:1396px;top:288px;width:1px;height:499px;background:rgba(200,215,215,0.18);"></div>
<div class="a" style="left:1483px;top:288px;width:1px;height:499px;background:rgba(200,215,215,0.18);"></div>
<div class="a" style="left:1706px;top:288px;width:1px;height:499px;background:rgba(200,215,215,0.18);"></div>
<div class="a" style="left:1891px;top:65px;width:19px;height:811px;background:#f9f9f9;"></div>
<svg style="left:1892px;top:74px" width="18" height="12" viewBox="0 0 18 12"><path d="M8.5 1.5 L13.8 9.8 H3.2Z" fill="#8a8a8a" stroke="#8a8a8a" stroke-width="1.5" stroke-linejoin="round"/></svg>
<div class="a" style="left:1895px;top:94px;width:11px;height:605px;background:#8a8a8a;border-radius:5.5px;"></div>
<svg style="left:1892px;top:856px" width="18" height="12" viewBox="0 0 18 12"><path d="M3.2 1.5 H13.8 L8.5 9.8Z" fill="#8a8a8a" stroke="#8a8a8a" stroke-width="1.5" stroke-linejoin="round"/></svg>
<svg style="left:1385.5px;top:857.6px" width="14" height="22" viewBox="0 0 14 22">
<path d="M1 1 V17.5 L4.8 13.9 L7.6 20.3 L10.2 19.2 L7.5 12.9 H12.6Z" fill="#fff" stroke="#000" stroke-width="1.1" stroke-linejoin="round"/></svg>
</body></html>
